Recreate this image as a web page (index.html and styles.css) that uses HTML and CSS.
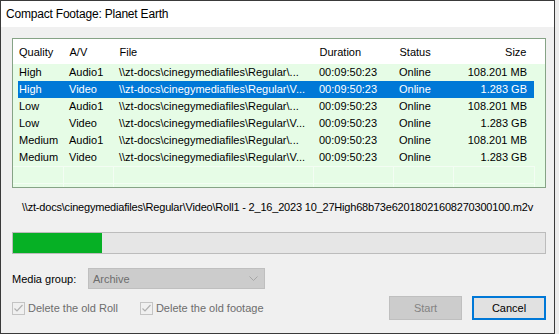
FILE: index.html
```html
<!DOCTYPE html>
<html>
<head>
<meta charset="utf-8">
<link rel="stylesheet" href="styles.css">
</head>
<body>
<div class="window">
  <div class="titlebar">Compact Footage: Planet Earth</div>
  <div class="content">
    <div class="list">
      <table class="grid">
        <colgroup>
          <col class="c1"><col class="c2"><col class="c3"><col class="c4"><col class="c5"><col class="c6">
        </colgroup>
        <thead>
          <tr><th>Quality</th><th>A/V</th><th>File</th><th>Duration</th><th>Status</th><th class="num">Size</th></tr>
        </thead>
        <tbody>
          <tr><td>High</td><td>Audio1</td><td>\\zt-docs\cinegymediafiles\Regular\...</td><td>00:09:50:23</td><td>Online</td><td class="num">108.201 MB</td></tr>
          <tr class="sel"><td>High</td><td>Video</td><td>\\zt-docs\cinegymediafiles\Regular\V...</td><td>00:09:50:23</td><td>Online</td><td class="num">1.283 GB</td></tr>
          <tr><td>Low</td><td>Audio1</td><td>\\zt-docs\cinegymediafiles\Regular\...</td><td>00:09:50:23</td><td>Online</td><td class="num">108.201 MB</td></tr>
          <tr><td>Low</td><td>Video</td><td>\\zt-docs\cinegymediafiles\Regular\V...</td><td>00:09:50:23</td><td>Online</td><td class="num">1.283 GB</td></tr>
          <tr><td>Medium</td><td>Audio1</td><td>\\zt-docs\cinegymediafiles\Regular\...</td><td>00:09:50:23</td><td>Online</td><td class="num">108.201 MB</td></tr>
          <tr><td>Medium</td><td>Video</td><td>\\zt-docs\cinegymediafiles\Regular\V...</td><td>00:09:50:23</td><td>Online</td><td class="num">1.283 GB</td></tr>
          <tr class="empty"><td></td><td></td><td></td><td></td><td></td><td></td></tr>
          <tr class="empty"><td></td><td></td><td></td><td></td><td></td><td></td></tr>
        </tbody>
      </table>
    </div>
    <div class="path">\\zt-docs\cinegymediafiles\Regular\Video\Roll1 - 2_16_2023 10_27High68b73e62018021608270300100.m2v</div>
    <div class="progress"><div class="fill" style="width:89px"></div></div>
    <div class="media-row">
      <span class="label">Media group:</span>
      <div class="combo">
        <span>Archive</span>
        <svg class="chev" width="9" height="5" viewBox="0 0 9 5"><path d="M0.5 0.5 L4.5 4.5 L8.5 0.5" fill="none" stroke="#a6a6a6" stroke-width="1"/></svg>
      </div>
    </div>
    <div class="bottom-row">
      <label class="check"><span class="box"><svg width="11" height="11" viewBox="0 0 11 11"><path d="M1.5 5.5 L4 8 L9.5 2" fill="none" stroke="#b0b0b0" stroke-width="1.2"/></svg></span>Delete the old Roll</label>
      <label class="check second"><span class="box"><svg width="11" height="11" viewBox="0 0 11 11"><path d="M1.5 5.5 L4 8 L9.5 2" fill="none" stroke="#b0b0b0" stroke-width="1.2"/></svg></span>Delete the old footage</label>
      <div class="spacer"></div>
      <button class="btn disabled">Start</button>
      <button class="btn default">Cancel</button>
    </div>
  </div>
</div>
</body>
</html>
```
FILE: styles.css
```css
html, body {
  margin: 0;
  padding: 0;
  background: #ececec;
}
body {
  width: 559px;
  height: 334px;
  overflow: hidden;
  font-family: "Liberation Sans", Arial, sans-serif;
  font-size: 11px;
  color: #000;
}
.window {
  box-sizing: border-box;
  width: 555px;
  height: 334px;
  border: 1px solid #3a3a3a;
  background: #f0f0f0;
  display: flex;
  flex-direction: column;
}
.titlebar {
  height: 26px;
  background: #ffffff;
  padding-left: 5px;
  font-size: 12px;
  letter-spacing: -0.2px;
  line-height: 26px;
}
.content {
  padding: 11px 8px 0 11px;
  display: flex;
  flex-direction: column;
}
.list {
  box-sizing: border-box;
  height: 150px;
  border: 1px solid #86a386;
  background: #e6fce6;
  overflow: hidden;
  position: relative;
}
.grid {
  border-collapse: collapse;
  table-layout: fixed;
  width: 521px;
}
.c1 { width: 50px; }
.c2 { width: 50px; }
.c3 { width: 200px; }
.c4 { width: 80px; }
.c5 { width: 60px; }
.c6 { width: 81px; }
.list::before {
  content: "";
  position: absolute;
  left: 0; right: 0; top: 0;
  height: 25px;
  background: #fff;
}
.grid thead th {
  position: relative;
  height: 25px;
  padding: 0 0 0 6px;
  font-weight: normal;
  text-align: left;
  background: #fff;
  border-right: 1px solid #e5e5e5;
  white-space: nowrap;
}
.grid td {
  height: 17px;
  padding: 0 0 0 6px;
  white-space: nowrap;
  overflow: hidden;
  line-height: 17px;
}
.grid .num {
  text-align: right;
  padding-right: 7px;
}
.grid tr.sel td {
  background: #0078d7;
  color: #fff;
}
.grid tr.sel td:first-child {
  background: linear-gradient(to right, #e6fce6 5px, #0078d7 5px);
}
.grid tr.empty td {
  border-right: 1px solid #f3fdf3;
  border-top: 1px solid #f3fdf3;
  height: 16px;
}
.path {
  margin-top: 12px;
  padding-left: 10px;
  line-height: 15px;
  letter-spacing: -0.2px;
  white-space: nowrap;
}
.progress {
  box-sizing: border-box;
  margin-top: 17px;
  height: 22px;
  border: 1px solid #bcbcbc;
  background: #e6e6e6;
}
.fill {
  height: 100%;
  background: #06b025;
}
.media-row {
  margin-top: 14px;
  display: flex;
  align-items: center;
}
.label {
  width: 76px;
}
.combo {
  box-sizing: border-box;
  width: 177px;
  height: 21px;
  border: 1px solid #bfbfbf;
  background: #cccccc;
  color: #6d6d6d;
  display: flex;
  align-items: center;
  justify-content: space-between;
  padding: 0 6px 0 4px;
}
.bottom-row {
  margin-top: 7px;
  display: flex;
  align-items: center;
}
.check {
  display: flex;
  align-items: center;
  color: #6d6d6d;
}
.check.second {
  margin-left: 22px;
}
.box {
  box-sizing: border-box;
  width: 13px;
  height: 13px;
  border: 1px solid #c4c4c4;
  background: #f0f0f0;
  margin-right: 3px;
  display: flex;
  align-items: center;
  justify-content: center;
}
.box svg { display: block; }
.spacer { flex: 1; }
.btn {
  box-sizing: border-box;
  height: 24px;
  font-family: "Liberation Sans", Arial, sans-serif;
  font-size: 11px;
  padding: 0;
  margin: 0;
}
.btn.disabled {
  width: 73px;
  background: #cccccc;
  border: 1px solid #bfbfbf;
  color: #838383;
}
.btn.default {
  width: 74px;
  margin-left: 10px;
  background: #e1e1e1;
  border: 2px solid #0078d7;
  color: #000;
}
```
